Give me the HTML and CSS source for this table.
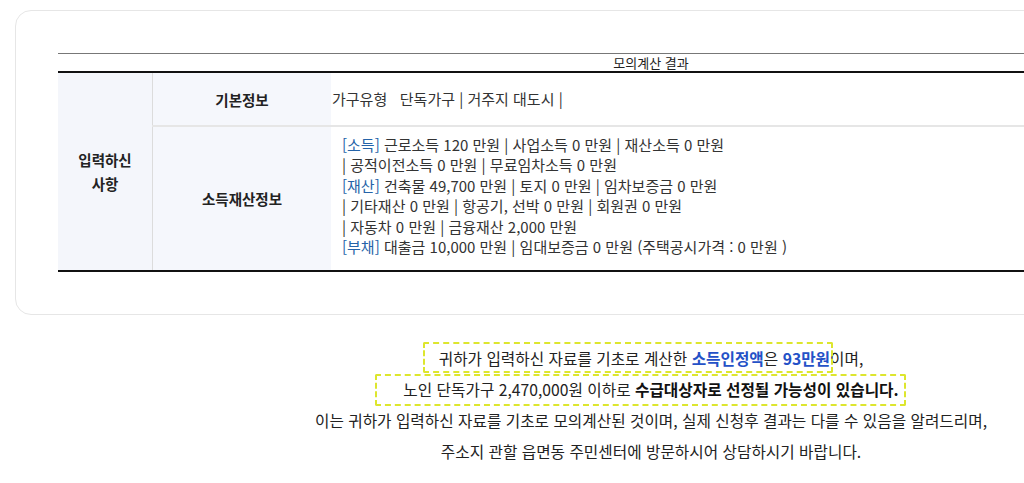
FILE: index.html
```html
<!DOCTYPE html>
<html lang="ko">
<head>
<meta charset="utf-8">
<title>모의계산 결과</title>
<link rel="stylesheet" href="styles.css">
</head>
<body>
<div class="page">
  <section class="card">
    <table class="result">
      <thead>
        <tr><th colspan="3" class="caption">모의계산 결과</th></tr>
      </thead>
      <tbody>
        <tr class="row-basic">
          <th rowspan="2" class="group">입력하신<br>사항</th>
          <th class="label">기본정보</th>
          <td class="value value-basic">가구유형&nbsp;&nbsp;&nbsp;단독가구 | 거주지 대도시 |</td>
        </tr>
        <tr class="row-income">
          <th class="label">소득재산정보</th>
          <td class="value value-income">
            <span class="tag">[소득]</span> 근로소득 120 만원 | 사업소득 0 만원 | 재산소득 0 만원<br>
            | 공적이전소득 0 만원 | 무료임차소득 0 만원<br>
            <span class="tag">[재산]</span> 건축물 49,700 만원 | 토지 0 만원 | 임차보증금 0 만원<br>
            | 기타재산 0 만원 | 항공기, 선박 0 만원 | 회원권 0 만원<br>
            | 자동차 0 만원 | 금융재산 2,000 만원<br>
            <span class="tag">[부채]</span> 대출금 10,000 만원 | 임대보증금 0 만원 (주택공시가격 : 0 만원 )
          </td>
        </tr>
      </tbody>
    </table>
  </section>
  <div class="notice">
    <p><span class="mark mark-one">귀하가 입력하신 자료를 기초로 계산한 <strong class="blue">소득인정액</strong>은 <strong class="blue">93만원</strong></span>이며,</p>
    <p><span class="mark mark-two">노인 단독가구 2,470,000원 이하로 <strong>수급대상자로 선정될 가능성이 있습니다.</strong></span></p>
    <p>이는 귀하가 입력하신 자료를 기초로 모의계산된 것이며, 실제 신청후 결과는 다를 수 있음을 알려드리며,</p>
    <p>주소지 관할 읍면동 주민센터에 방문하시어 상담하시기 바랍니다.</p>
  </div>
</div>
</body>
</html>
```

FILE: styles.css
```css
html, body {
  margin: 0;
  padding: 0;
  background: #fff;
  overflow: hidden;
}
body {
  font-family: "Noto Sans CJK KR", "Noto Sans", sans-serif;
  color: #333;
}
.page {
  width: 1302px;
}
.card {
  margin: 10px 15px 0;
  border: 1px solid #e6e6e6;
  border-radius: 16px;
  padding: 42px 42px 42px;
}
.result {
  width: 100%;
  border-collapse: collapse;
  font-size: 15px;
}
.caption {
  border-top: 1px solid #777;
  border-bottom: 2px solid #111;
  font-size: 13px;
  font-weight: 400;
  color: #222;
  height: 17px;
  line-height: 17px;
  padding: 0;
}
.group {
  width: 94px;
  background: #f4f6fb;
  border-right: 1px solid #dcdcdc;
  font-weight: 700;
  color: #222;
  font-size: 14.5px;
  line-height: 24px;
  padding: 0;
}
.label {
  width: 178px;
  background: #f5f7fc;
  font-weight: 700;
  font-size: 14.5px;
  color: #222;
  padding: 0;
}
.row-basic .label, .row-basic .value {
  border-bottom: 2px solid #e6e6e6;
}
.row-basic {
  height: 54px;
}
.value {
  text-align: left;
  line-height: 20.4px;
  padding: 10px 11px;
}
.value-basic {
  padding-left: 1px;
}
.value-income {
  padding: 8px 11px 13px;
}
.row-income {
  border-bottom: 2px solid #111;
}
.tag {
  color: #2563a8;
}
.notice {
  margin-top: 28px;
  text-align: center;
  font-size: 15.7px;
  color: #222;
}
.notice p {
  margin: 0;
  line-height: 31px;
}
.notice strong {
  font-weight: 700;
  color: #111;
}
.notice .blue {
  color: #2451c7;
}
.mark {
  position: relative;
}
.mark::after {
  content: "";
  position: absolute;
  border: 2px dashed #dde62e;
  border-radius: 2px;
  pointer-events: none;
}
.mark-one::after {
  left: -16px;
  right: -3px;
  top: -5px;
  bottom: -3px;
}
.mark-two::after {
  left: -28px;
  right: -7px;
  top: -4px;
  bottom: -5px;
}
```
